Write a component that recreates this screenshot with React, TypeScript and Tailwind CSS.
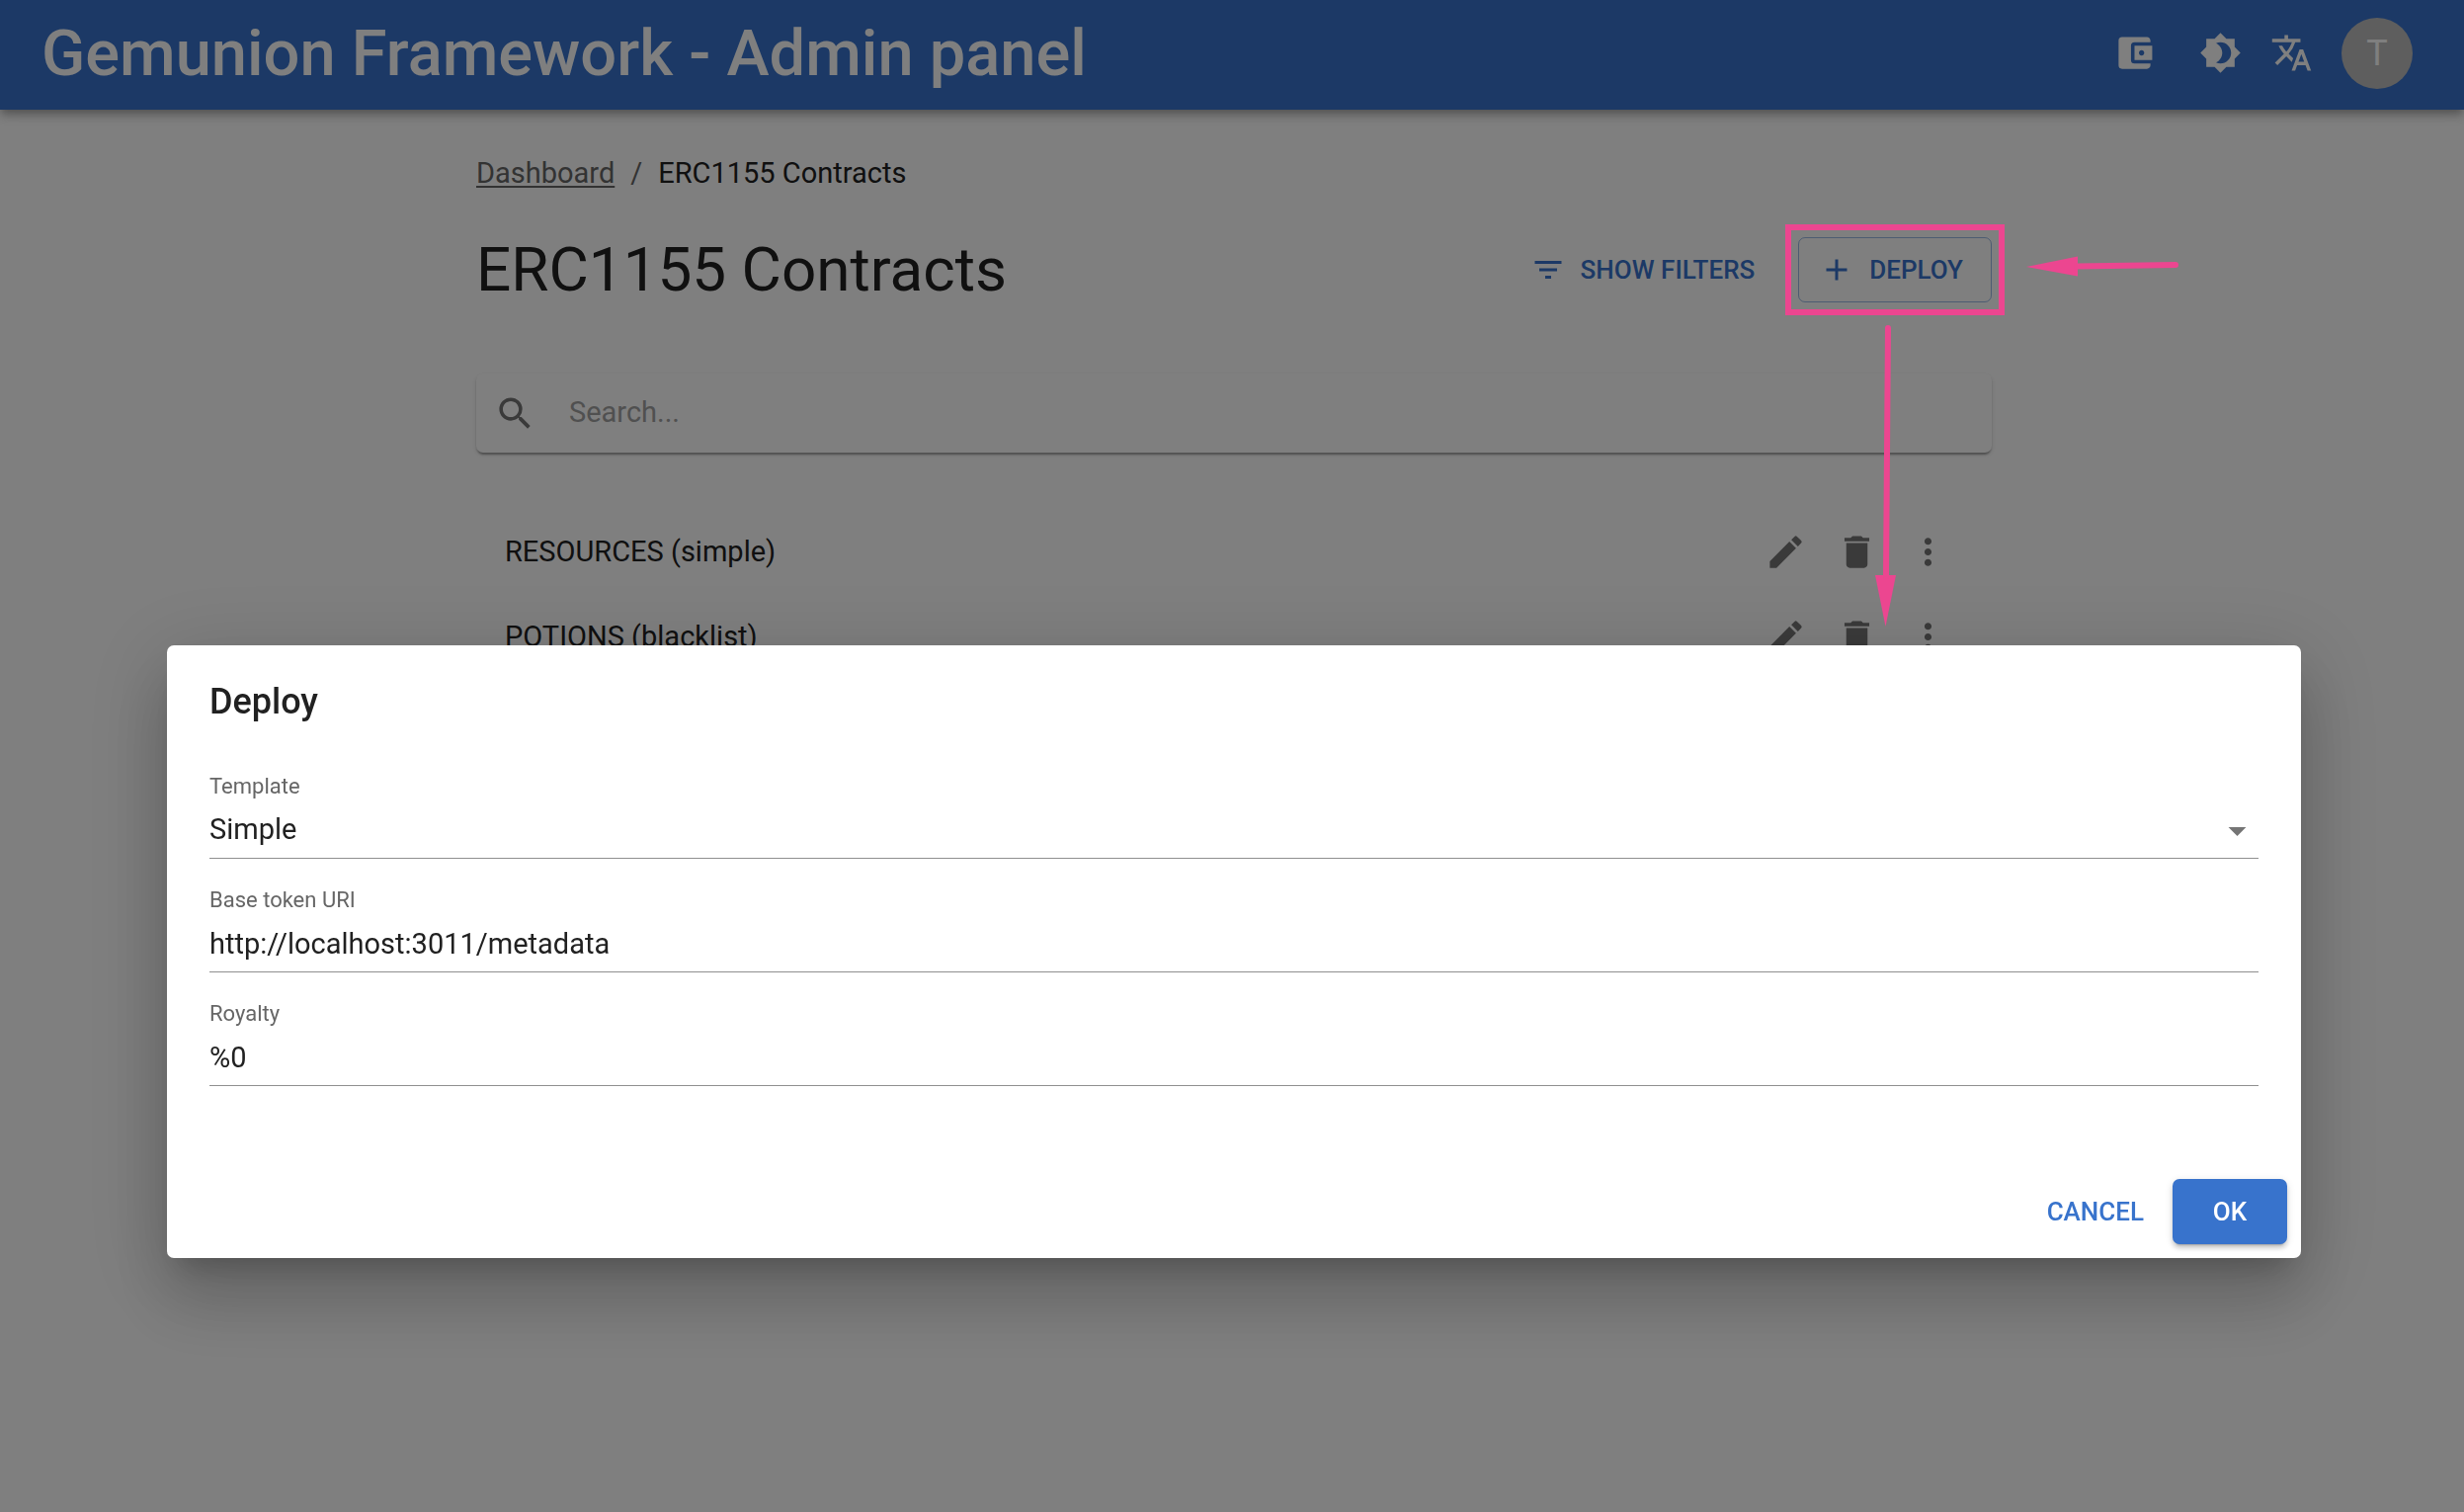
import { useState } from "react";
import {
  MdAccountBalanceWallet,
  MdAdd,
  MdArrowDropDown,
  MdBrightness4,
  MdCreate,
  MdDelete,
  MdFilterList,
  MdMoreVert,
  MdSearch,
  MdTranslate,
} from "react-icons/md";

const contracts = ["RESOURCES (simple)", "POTIONS (blacklist)"];

const iconButton = "flex size-[72px] shrink-0 items-center justify-center rounded-full";
const fieldLabel = "block h-[28px] text-[22px] leading-[26px] text-[#666666]";
const fieldInput =
  "block h-[58px] w-full appearance-none rounded-none border-b border-[#8f8f8f] bg-transparent text-[29px] leading-[41px] text-[#212121] outline-none";

function Header() {
  return (
    <header className="relative flex h-[111px] items-center justify-between bg-[#3873cc] pr-[52px] pb-1 pl-[42px] text-white shadow-[0_4px_7px_-2px_rgba(0,0,0,0.2),0_7px_9px_0_rgba(0,0,0,0.14),0_2px_18px_0_rgba(0,0,0,0.12)]">
      <div className="text-[65px] leading-[78px] font-medium">Gemunion Framework - Admin panel</div>
      <div className="flex items-center gap-[15px]">
        <button type="button" aria-label="Wallet" className={iconButton}>
          <MdAccountBalanceWallet className="size-[43px]" />
        </button>
        <div className="flex">
          <button type="button" aria-label="Toggle theme" className={iconButton}>
            <MdBrightness4 className="size-[43px]" />
          </button>
          <button type="button" aria-label="Change language" className={iconButton}>
            <MdTranslate className="size-[43px]" />
          </button>
        </div>
        <button
          type="button"
          aria-label="Account"
          className="flex size-[72px] items-center justify-center rounded-full bg-[#bdbdbd] text-[36px] leading-none"
        >
          T
        </button>
      </div>
    </header>
  );
}

function Annotations() {
  return (
    <>
      <div className="pointer-events-none absolute -inset-[13px] z-30 border-6 border-[#ec4690]" />
      <svg
        className="pointer-events-none absolute top-[15px] left-full z-30 ml-8 h-[30px] w-[160px]"
        viewBox="0 0 160 30"
        aria-hidden="true"
      >
        <path d="M3 15 55 4.5V24.5Z" fill="#ec4690" />
        <path d="M54 14.5 154 13" stroke="#ec4690" strokeWidth="6" strokeLinecap="round" />
      </svg>
      <svg
        className="pointer-events-none absolute top-[85px] left-[75px] z-30 h-[312px] w-[30px]"
        viewBox="0 0 30 312"
        aria-hidden="true"
      >
        <path d="M3 257H24L13.5 309Z" fill="#ec4690" />
        <path d="M16 7 14 258" stroke="#ec4690" strokeWidth="6" strokeLinecap="round" />
      </svg>
    </>
  );
}

function ContractsPage() {
  return (
    <main className="mx-auto max-w-[1534px] pt-[43px]">
      <nav aria-label="Breadcrumb" className="text-[29px] leading-[43px]">
        <ol className="flex">
          <li>
            <a href="#dashboard" className="text-[#666666] underline decoration-2 underline-offset-3">
              Dashboard
            </a>
          </li>
          <li aria-hidden="true" className="mx-4 text-[#666666]">
            /
          </li>
          <li className="text-[#212121]">ERC1155 Contracts</li>
        </ol>
      </nav>

      <div className="mt-[38px] flex items-center justify-between">
        <h1 className="text-[62px] leading-[75px] text-[#212121]">ERC1155 Contracts</h1>
        <div className="flex items-center gap-[30px] text-[26px] leading-[44px] font-medium text-[#3873cc]">
          <button type="button" className="flex h-[66px] items-center gap-[15px] px-[14px]">
            <MdFilterList className="size-9" />
            SHOW FILTERS
          </button>
          <div className="relative">
            <button
              type="button"
              className="flex h-[66px] items-center gap-[15px] rounded-[7px] border border-[#3873cc]/50 pr-[28px] pl-5"
            >
              <MdAdd className="size-9" />
              DEPLOY
            </button>
            <Annotations />
          </div>
        </div>
      </div>

      <div className="mt-[68px] flex h-20 items-center rounded-[7px] bg-white pl-[18px] shadow-[0_4px_2px_-2px_rgba(0,0,0,0.2),0_2px_2px_0_rgba(0,0,0,0.14),0_2px_5px_0_rgba(0,0,0,0.12)]">
        <button type="button" aria-label="Search" className="text-[#757575]">
          <MdSearch className="size-[43px]" />
        </button>
        <input
          type="text"
          aria-label="Search"
          placeholder="Search..."
          className="ml-[33px] min-w-0 flex-1 bg-transparent text-[29px] text-[#212121] outline-none placeholder:text-[#a1a1a1]"
        />
      </div>

      <ul className="mt-[57px]">
        {contracts.map((name) => (
          <li key={name} className="flex h-[86px] items-center justify-between px-[29px]">
            <span className="text-[29px] leading-[43px] text-[#212121]">{name}</span>
            <div className="flex text-[#757575]">
              <button type="button" aria-label={`Edit ${name}`} className={iconButton}>
                <MdCreate className="size-[43px]" />
              </button>
              <button type="button" aria-label={`Delete ${name}`} className={iconButton}>
                <MdDelete className="size-[43px]" />
              </button>
              <button type="button" aria-label={`More actions for ${name}`} className={iconButton}>
                <MdMoreVert className="size-[43px]" />
              </button>
            </div>
          </li>
        ))}
      </ul>
    </main>
  );
}

function DeployDialog() {
  const [template, setTemplate] = useState("Simple");
  const [uri, setUri] = useState("http://localhost:3011/metadata");
  const [royalty, setRoyalty] = useState("%0");

  return (
    <div className="fixed inset-0 z-20 bg-black/50 pt-[653px] pl-1">
      <form
        role="dialog"
        aria-modal="true"
        aria-labelledby="deploy-title"
        onSubmit={(event) => event.preventDefault()}
        className="mx-auto max-w-[2160px] rounded-[7px] bg-white shadow-[0_20px_27px_-13px_rgba(0,0,0,0.2),0_43px_68px_5px_rgba(0,0,0,0.14),0_16px_83px_14px_rgba(0,0,0,0.12)]"
      >
        <h2 id="deploy-title" className="px-[43px] py-[29px] text-[36px] leading-[57px] font-medium text-[#212121]">
          Deploy
        </h2>
        <div className="flex flex-col gap-[29px] px-[43px] pt-[15px] pb-20">
          <div>
            <label htmlFor="template" className={fieldLabel}>
              Template
            </label>
            <div className="relative">
              <select
                id="template"
                value={template}
                onChange={(event) => setTemplate(event.target.value)}
                className={fieldInput}
              >
                <option>Simple</option>
                <option>Blacklist</option>
              </select>
              <MdArrowDropDown className="pointer-events-none absolute top-2 right-0 size-[43px] text-[#757575]" />
            </div>
          </div>
          <div>
            <label htmlFor="base-token-uri" className={fieldLabel}>
              Base token URI
            </label>
            <input
              id="base-token-uri"
              type="text"
              value={uri}
              onChange={(event) => setUri(event.target.value)}
              className={fieldInput}
            />
          </div>
          <div>
            <label htmlFor="royalty" className={fieldLabel}>
              Royalty
            </label>
            <input
              id="royalty"
              type="text"
              value={royalty}
              onChange={(event) => setRoyalty(event.target.value)}
              className={fieldInput}
            />
          </div>
        </div>
        <div className="flex justify-end gap-[14px] p-[14px] text-[26px] leading-[44px] font-medium">
          <button type="button" className="h-[66px] px-[15px] text-[#3873cc]">
            CANCEL
          </button>
          <button
            type="submit"
            className="h-[66px] min-w-[116px] rounded-[7px] bg-[#3873cc] px-7 text-white shadow-[0_5px_2px_-4px_rgba(0,0,0,0.2),0_4px_4px_0_rgba(0,0,0,0.14),0_2px_9px_0_rgba(0,0,0,0.12)]"
          >
            OK
          </button>
        </div>
      </form>
    </div>
  );
}

export default function App() {
  return (
    <div className="min-h-screen bg-white font-[Roboto,sans-serif]">
      <Header />
      <div className="pl-1">
        <ContractsPage />
      </div>
      <DeployDialog />
    </div>
  );
}
